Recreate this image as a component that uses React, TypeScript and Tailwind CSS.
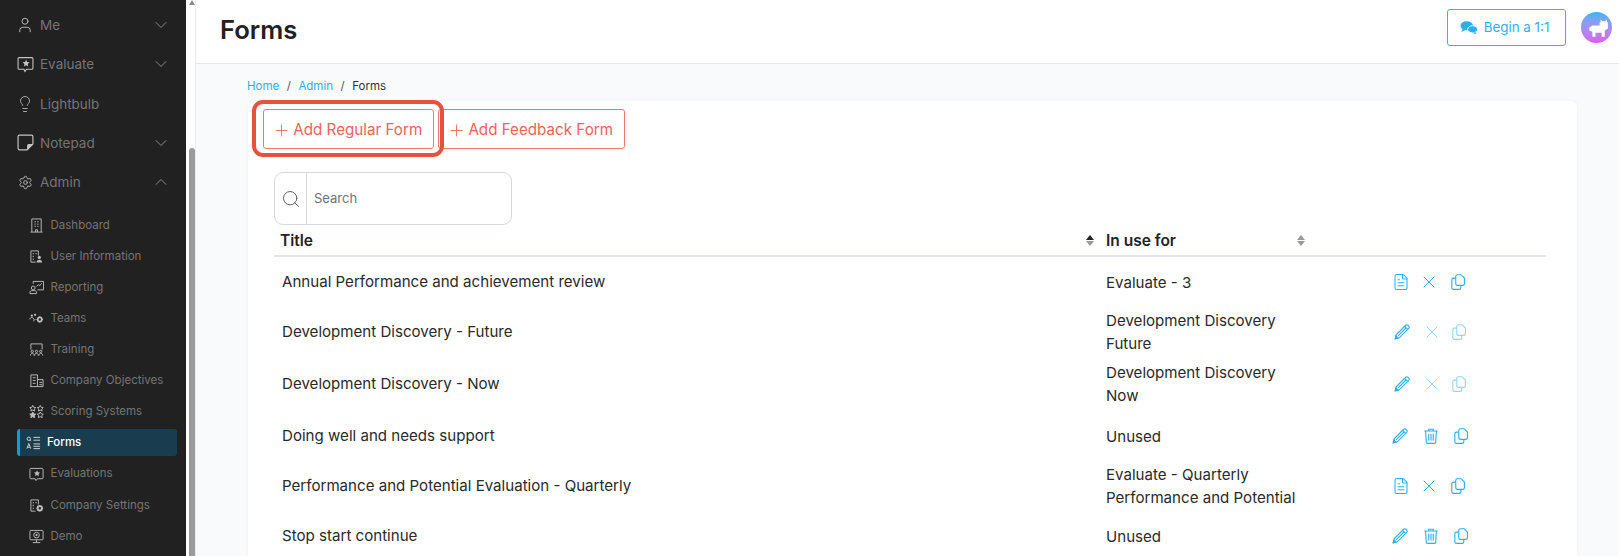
import { ChevronDown, ChevronUp, FileText, Lightbulb, Plus, Search, Settings, User, X } from "lucide-react";
import type { ReactNode } from "react";

const Svg = ({ children, className = "w-[15px] h-[15px]" }: { children: ReactNode; className?: string }) => (
  <svg viewBox="0 0 16 16" fill="none" stroke="currentColor" strokeWidth="1" className={className}>
    {children}
  </svg>
);

const EvaluateIcon = ({ className }: { className?: string }) => (
  <Svg className={className}>
    <path d="M2 1.500h12a1 1 0 0 1 1 1v9a1 1 0 0 1-1 1H9l-1.500 2-1-2H2a1 1 0 0 1-1-1v-9a1 1 0 0 1 1-1z" />
    <path d="M8.500 3.500l1 2.200 2.300.2-1.700 1.600.5 2.300-2.100-1.200-2 1.200.5-2.300-1.700-1.600 2.300-.2z" fill="currentColor" stroke="none" />
  </Svg>
);

const NotepadIcon = () => (
  <Svg className="w-[17px] h-[17px]">
    <path d="M9.500 15H2.500A1.500 1.500 0 0 1 1 13.500v-11A1.500 1.500 0 0 1 2.500 1h11A1.500 1.500 0 0 1 15 2.500v7L9.500 15z" strokeWidth="1.100" />
    <path d="M10 14.500V11a1 1 0 0 1 1-1h3.500" fill="currentColor" />
  </Svg>
);

const PencilIcon = () => (
  <Svg className="w-[18px] h-[18px]">
    <path d="M2 14l.8-3.500L11.300 2a1.400 1.400 0 0 1 2 0l.7.700a1.400 1.400 0 0 1 0 2L5.500 13.200z" />
    <path d="M4.500 11.500L12 4M10.300 3l2.700 2.700" />
    <path d="M2 14l.6-2.500 1.900 1.900z" fill="currentColor" />
  </Svg>
);

const TrashIcon = () => (
  <Svg className="w-[18px] h-[18px]">
    <path d="M2 3.500h12M6 3.500V2h4v1.500M3.200 3.500l.6 10a1 1 0 0 0 1 1h6.400a1 1 0 0 0 1-1l.6-10" />
    <path d="M6 6v6M8 6v6M10 6v6" />
  </Svg>
);

const CopyIcon = ({ className }: { className?: string }) => (
  <Svg className={`w-[18px] h-[18px] ${className ?? ""}`}>
    <path d="M7.500 1.500h3.200l3 3v5a1.500 1.500 0 0 1-1.500 1.500H7.500A1.500 1.500 0 0 1 6 9.500V3a1.500 1.500 0 0 1 1.500-1.500z" />
    <path d="M6 4.500H4A1.500 1.500 0 0 0 2.500 6v7A1.500 1.500 0 0 0 4 14.500h5a1.500 1.500 0 0 0 1.500-1.500v-2" />
  </Svg>
);

const subIcons: Record<string, ReactNode> = {
  Dashboard: (
    <Svg>
      <path d="M3 15V1h10v14M1.500 15h13M7 15v-2.500h2V15" />
      <path d="M6 4h1M9 4h1M6 6.500h1M9 6.500h1M6 9h1M9 9h1" strokeWidth="1.400" />
    </Svg>
  ),
  "User Information": (
    <Svg>
      <path d="M7 14H2V2h8v5" />
      <path d="M4 5h1M7 5h1M4 8h1M4 11h1" strokeWidth="1.400" />
      <circle cx="11" cy="9" r="1.700" fill="currentColor" stroke="none" />
      <path d="M8 14.500c0-2 1.400-3 3-3s3 1 3 3z" fill="currentColor" stroke="none" />
    </Svg>
  ),
  Reporting: (
    <Svg>
      <path d="M4.500 4V1.500h11v9H9" />
      <path d="M8 7l2-2 1.500 1 2-2.500" />
      <circle cx="4.500" cy="8.500" r="2" />
      <path d="M1 14.500v-1.500c0-1 1-1.700 2-1.700h3c1 0 2 .7 2 1.700v1.500z" />
    </Svg>
  ),
  Teams: (
    <Svg>
      <circle cx="3" cy="5" r="1.200" fill="currentColor" stroke="none" />
      <circle cx="6.500" cy="4" r="1.200" fill="currentColor" stroke="none" />
      <path d="M1 9c0-1.500 1-2 2-2s2 .5 2 2M5 11c0-1.500 1-2 2-2" />
      <circle cx="11.500" cy="9" r="2.200" strokeWidth="1.800" />
      <path d="M11.500 5.500v1M11.500 11.500v1M8 9h1M14 9h1" strokeWidth="1.200" />
    </Svg>
  ),
  Training: (
    <Svg>
      <path d="M2 8V2h12v6" />
      <circle cx="3.500" cy="10" r="1.200" />
      <circle cx="8" cy="10" r="1.200" />
      <circle cx="12.500" cy="10" r="1.200" />
      <path d="M1.500 14.500c0-1.500 1-2.500 2-2.500s2 1 2 2.500M6 14.500c0-1.500 1-2.500 2-2.500s2 1 2 2.500M10.500 14.500c0-1.500 1-2.500 2-2.500s2 1 2 2.500" />
    </Svg>
  ),
  "Company Objectives": (
    <Svg>
      <path d="M2 14V2h7v12M1 14.500h14M9 7h6v7.500" />
      <path d="M4 5h3M4 8h3M4 11h3M11 10h3M11 12.500h3" />
    </Svg>
  ),
  "Scoring Systems": (
    <Svg>
      <path d="M4 1.500l1 2 2.200.3-1.600 1.500.4 2.200-2-1-2 1 .4-2.200L.8 3.800 3 3.500zM12 1.500l1 2 2.200.3-1.600 1.500.4 2.200-2-1-2 1 .4-2.200-1.600-1.500L11 3.500z" />
      <path d="M4 8.500l1 2 2.200.3-1.600 1.500.4 2.200-2-1-2 1 .4-2.200L.8 10.800 3 10.500z" fill="currentColor" />
      <path d="M12 8.500l1 2 2.200.3-1.600 1.500.4 2.200-2-1-2 1 .4-2.200-1.600-1.500 2.200-.3z" />
    </Svg>
  ),
  Forms: (
    <Svg className="w-[16px] h-[16px]">
      <circle cx="3" cy="3.500" r="1.800" />
      <path d="M4.500 5l1 1M8 2h7M8 5h7M1 14l2-5.500L5 14M1.800 12.500h2.500M8 9h7M8 11.500h7M8 14h7" />
    </Svg>
  ),
  Evaluations: <EvaluateIcon />,
  "Company Settings": (
    <Svg>
      <path d="M7 14H2V2h8v5" />
      <path d="M4 5h1M7 5h1M4 8h1M4 11h1" strokeWidth="1.400" />
      <circle cx="11.500" cy="11" r="2.300" strokeWidth="2" />
      <path d="M11.500 7.500v1.200M11.500 13.300v1.200M8 11h1.200M13.800 11H15M9 8.500l1 1M13 12.500l1 1M14 8.500l-1 1M10 12.500l-1 1" strokeWidth="1.200" />
    </Svg>
  ),
  Demo: (
    <Svg>
      <rect x="1" y="1.500" width="14" height="10" rx="1" />
      <circle cx="8" cy="6.500" r="3" />
      <circle cx="8" cy="6.500" r="1.200" fill="currentColor" stroke="none" />
      <path d="M8 11.500v2.500M4 14.500h8" />
    </Svg>
  ),
};

const topItems: { label: string; icon: ReactNode; chevron?: "down" | "up" }[] = [
  { label: "Me", icon: <User className="w-[18px] h-[18px]" strokeWidth={1.2} />, chevron: "down" },
  { label: "Evaluate", icon: <EvaluateIcon className="w-[17px] h-[17px]" />, chevron: "down" },
  { label: "Lightbulb", icon: <Lightbulb className="w-[18px] h-[18px]" strokeWidth={1.1} /> },
  { label: "Notepad", icon: <NotepadIcon />, chevron: "down" },
  { label: "Admin", icon: <Settings className="w-[15px] h-[15px]" strokeWidth={1.4} />, chevron: "up" },
];

const subItems = [
  "Dashboard",
  "User Information",
  "Reporting",
  "Teams",
  "Training",
  "Company Objectives",
  "Scoring Systems",
  "Forms",
  "Evaluations",
  "Company Settings",
  "Demo",
];

type Row = { title: string; use: string[]; first: "doc" | "edit"; second: "x" | "trash"; faded?: boolean; h: string };

const rows: Row[] = [
  { title: "Annual Performance and achievement review", use: ["Evaluate - 3"], first: "doc", second: "x", h: "h-[50px]" },
  { title: "Development Discovery - Future", use: ["Development Discovery", "Future"], first: "edit", second: "x", faded: true, h: "h-[50px]" },
  { title: "Development Discovery - Now", use: ["Development Discovery", "Now"], first: "edit", second: "x", faded: true, h: "h-[54px]" },
  { title: "Doing well and needs support", use: ["Unused"], first: "edit", second: "trash", h: "h-[50px]" },
  { title: "Performance and Potential Evaluation - Quarterly", use: ["Evaluate - Quarterly", "Performance and Potential"], first: "doc", second: "x", h: "h-[50px]" },
  { title: "Stop start continue", use: ["Unused"], first: "edit", second: "trash", h: "h-[50px]" },
];

const SortIcon = ({ active }: { active?: boolean }) => (
  <span className="flex flex-col gap-[1px]">
    <span className={`w-0 h-0 border-x-[4px] border-x-transparent border-b-[5px] ${active ? "border-b-[#222222]" : "border-b-[#9a9a9a]"}`} />
    <span className="w-0 h-0 border-x-[4px] border-x-transparent border-t-[5px] border-t-[#9a9a9a]" />
  </span>
);

const RowActions = ({ row }: { row: Row }) => {
  const isDoc = row.first === "doc";
  const isTrash = row.second === "trash";
  const wrap = isDoc ? "pl-[22px]" : isTrash ? "pl-[21px]" : "pl-[23px]";
  const gapA = isDoc ? "ml-[9px]" : isTrash ? "ml-[13px]" : "ml-[11px]";
  const gapB = isDoc ? "ml-[10px]" : isTrash ? "ml-[12px]" : "ml-[8px]";
  return (
    <div className={`flex items-center text-[#2eaef0] ${wrap}`}>
      {isDoc ? <FileText className="w-[18px] h-[18px]" strokeWidth={1.4} /> : <PencilIcon />}
      <span className={gapA}>
        {isTrash ? <TrashIcon /> : <X className={`w-[20px] h-[20px] ${row.faded ? "opacity-50" : ""}`} strokeWidth={1.2} />}
      </span>
      <CopyIcon className={`${gapB} ${row.faded ? "opacity-50" : ""}`} />
    </div>
  );
};

export default function App() {
  return (
    <div className="flex w-[1619px] h-[556px] overflow-hidden bg-white font-['Inter',sans-serif]">
      <aside className="w-[186px] shrink-0 bg-[#212121] pt-[5.500px] pl-[17px] pr-[9px]">
        {topItems.map((item) => (
          <div key={item.label} className="flex items-center h-[39.250px] pl-[1px] pr-[6px] text-[#757575]">
            <span className="w-[22px] flex justify-center text-[#c4c4c4] -ml-[4px] mr-[4px]">{item.icon}</span>
            <span className="flex-1 text-[13.500px]">{item.label}</span>
            {item.chevron === "down" && <ChevronDown className="w-[20px] h-[20px] text-[#8a8a8a]" strokeWidth={1.2} />}
            {item.chevron === "up" && <ChevronUp className="w-[20px] h-[20px] text-[#8a8a8a]" strokeWidth={1.2} />}
          </div>
        ))}
        <div className="mt-[8px]">
          {subItems.map((label) =>
            label === "Forms" ? (
              <div key={label} className="flex items-center h-[27px] my-[2.050px] rounded-[3px] border-l-[3px] border-[#0a9fdc] bg-[#1a3c4f] pl-[6px] text-[11.500px] font-medium text-white">
                <span className="w-[15px] mr-[6px] flex justify-center text-[#d8d8d8]">{subIcons[label]}</span>
                {label}
              </div>
            ) : (
              <div key={label} className="flex items-center h-[31.100px] pl-[11.500px] text-[11.500px] text-[#757575]">
                <span className="w-[15px] mr-[7px] flex justify-center text-[#bdbdbd]">{subIcons[label]}</span>
                {label}
              </div>
            ),
          )}
        </div>
      </aside>

      {/* page scrollbar */}
      <div className="w-[10px] shrink-0 flex flex-col items-center pl-[2px] bg-white border-r border-[#ececec]">
        <span className="w-0 h-0 border-x-[3px] border-x-transparent border-b-[5px] border-b-[#8a8a8a]" />
        <div className="mt-[143px] w-[6px] flex-1 bg-[#9b9b9b] rounded-t-[3px]" />
      </div>

      <main className="flex-1 min-w-0 bg-[#f9fafc]">
        <header className="flex items-center justify-between h-[64px] bg-white border-b border-[#e7e7e7] pl-[24px] pr-[7px] pb-[8px]">
          <h1 className="mt-[5px] text-[25.600px] font-semibold text-[#212121]">Forms</h1>
          <div className="flex items-center gap-[15px]">
            <button className="flex items-center gap-[6px] w-[119px] h-[37px] justify-center pr-[4px] rounded-[3px] border border-[#35b2ee] text-[13.400px] text-[#2eaef0]">
              <svg viewBox="0 0 20 16" className="w-[18px] h-[15px]" fill="currentColor">
                <ellipse cx="7.500" cy="6" rx="7" ry="5" />
                <path d="M3 9.500L1.500 13l5-2.500z" />
                <ellipse cx="14" cy="10" rx="5.500" ry="4" stroke="#fff" strokeWidth="1" />
                <path d="M17 13l1.500 2.500-4.500-1.500z" />
              </svg>
              Begin a 1:1
            </button>
            <span className="w-[31px] h-[31px] rounded-full bg-gradient-to-b from-[#2fb4f2] to-[#d860ee] overflow-hidden">
              <svg viewBox="0 0 30 30" className="w-full h-full" fill="#fff">
                <path d="M8 15l3-2h7v-3h8v6l-3 2v6h-3v-4h-6v4H11v-5l-3-1z" />
                <path d="M19 7l1.500 2h3L25 7v5h-6z" />
              </svg>
            </span>
          </div>
        </header>

        <div className="pl-[52px] pr-[42px]">
          <nav className="flex items-center h-[37px] -ml-[1px] pt-[9px] text-[11.500px] text-[#555]">
            <span className="text-[#2eaef0]">Home</span>
            <span className="mx-[7.500px]">/</span>
            <span className="text-[#2eaef0]">Admin</span>
            <span className="mx-[7.500px]">/</span>
            <span className="text-[#333]">Forms</span>
          </nav>

          <section className="bg-white rounded-[6px] h-[460px] shadow-[0_0_4px_rgba(0,0,0,0.04)]">
            <div className="flex items-center pl-[15px] pt-[8px]">
              <div className="relative">
                <button className="flex items-center gap-[2.500px] w-[171px] h-[40px] justify-center pr-[3px] pt-[2px] rounded-[3px] border border-[#f4766c] text-[15.200px] text-[#f0625a]">
                  <Plus className="w-[19px] h-[19px]" strokeWidth={1.1} />
                  Add Regular Form
                </button>
                {/* red annotation around the first button */}
                <span className="absolute -left-[11px] -top-[9px] w-[192px] h-[57px] rounded-[11px] border-[4px] border-[#e5533d]" />
              </div>
              <button className="ml-[4px] flex items-center gap-[2.500px] w-[187px] h-[40px] justify-center pr-[3px] pt-[2px] rounded-[3px] border border-[#f4766c] text-[15.200px] text-[#f0625a]">
                <Plus className="w-[19px] h-[19px]" strokeWidth={1.1} />
                Add Feedback Form
              </button>
            </div>

            <div className="pl-[26px] pr-[31px]">
              <div className="mt-[23px] flex w-[238px] h-[53px] rounded-[9px] border border-[#d5d8dc] bg-white">
                <span className="w-[32px] flex items-center justify-center border-r border-[#d5d8dc] text-[#555]">
                  <Search className="w-[20px] h-[20px]" strokeWidth={1.1} />
                </span>
                <span className="flex items-center pl-[7px] text-[13px] text-[#6b7280]">Search</span>
              </div>

              <div className="flex items-center h-[32px] border-b-2 border-[#e3e6ea] pl-[6px] pt-[1px] text-[15.500px] font-semibold text-[#212121]">
                <span className="flex-1">Title</span>
                <span className="mr-[12px]"><SortIcon active /></span>
                <span className="w-[191px]">In use for</span>
                <span className="w-[249px]"><SortIcon /></span>
              </div>

              {rows.map((row) => (
                <div key={row.title} className={`flex items-center ${row.h} pl-[8px] text-[15.100px] text-[#2a2a2a]`}>
                  <span className="flex-1">{row.title}</span>
                  <div className="w-[264px] leading-[23px]">
                    {row.use.map((u) => (
                      <div key={u}>{u}</div>
                    ))}
                  </div>
                  <div className="w-[176px]">
                    <RowActions row={row} />
                  </div>
                </div>
              ))}
            </div>
          </section>
        </div>
      </main>
    </div>
  );
}
